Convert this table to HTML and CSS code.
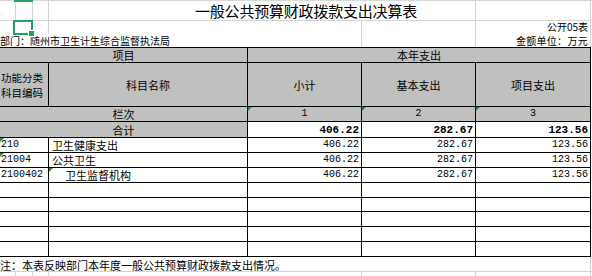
FILE: index.html
```html
<!DOCTYPE html>
<html lang="zh-CN">
<head>
<meta charset="utf-8">
<title>一般公共预算财政拨款支出决算表</title>
<link rel="stylesheet" href="styles.css">
</head>
<body>
<div class="sheet">
  <div class="row-title"><span class="title">一般公共预算财政拨款支出决算表</span></div>
  <div class="row-code"><span>公开05表</span></div>
  <div class="row-dept">
    <span class="dept">部门：随州市卫生计生综合监督执法局</span>
    <span class="unit">金额单位：万元</span>
  </div>

  <table class="grid">
    <colgroup>
      <col class="c1"><col class="c2"><col class="c3"><col class="c4"><col class="c5">
    </colgroup>
    <tr class="h15 head">
      <td colspan="2">项目</td>
      <td colspan="3">本年支出</td>
    </tr>
    <tr class="h44 head">
      <td class="code-head">功能分类<br>科目编码</td>
      <td>科目名称</td>
      <td>小计</td>
      <td>基本支出</td>
      <td>项目支出</td>
    </tr>
    <tr class="h15 head">
      <td colspan="2">栏次</td>
      <td class="mono mark">1</td>
      <td class="mono mark">2</td>
      <td class="mono mark">3</td>
    </tr>
    <tr class="h16">
      <td colspan="2" class="gray center">合计</td>
      <td class="num bold">406.22</td>
      <td class="num bold">282.67</td>
      <td class="num bold">123.56</td>
    </tr>
    <tr class="h15">
      <td class="code mark">210</td>
      <td class="name">卫生健康支出</td>
      <td class="num">406.22</td>
      <td class="num">282.67</td>
      <td class="num">123.56</td>
    </tr>
    <tr class="h15">
      <td class="code mark">21004</td>
      <td class="name">公共卫生</td>
      <td class="num">406.22</td>
      <td class="num">282.67</td>
      <td class="num">123.56</td>
    </tr>
    <tr class="h15">
      <td class="code">2100402</td>
      <td class="name indent mark">卫生监督机构</td>
      <td class="num">406.22</td>
      <td class="num">282.67</td>
      <td class="num">123.56</td>
    </tr>
    <tr class="h15"><td></td><td></td><td></td><td></td><td></td></tr>
    <tr class="h14"><td></td><td></td><td></td><td></td><td></td></tr>
    <tr class="h15"><td></td><td></td><td></td><td></td><td></td></tr>
    <tr class="h15"><td></td><td></td><td></td><td></td><td></td></tr>
    <tr class="h15"><td></td><td></td><td></td><td></td><td></td></tr>
  </table>

  <div class="row-note">注：本表反映部门本年度一般公共预算财政拨款支出情况。</div>
  <div class="row-tail"></div>

  <div class="sel-top"></div>
  <div class="sel-box"><span class="handle"></span></div>
</div>
</body>
</html>
```

FILE: styles.css
```css
html, body {
  margin: 0;
  padding: 0;
  background: #ffffff;
}

body {
  font-family: "Noto Sans CJK SC", "Noto Sans", sans-serif;
  font-size: 11px;
  color: #000000;
  width: 592px;
  height: 276px;
  overflow: hidden;
}

.sheet {
  position: relative;
  width: 592px;
  height: 276px;
}

/* --- top rows with light spreadsheet gridlines --- */
.row-title {
  height: 21px;
  box-sizing: border-box;
  border-top: 1px solid #d8d8d8;
  border-bottom: 1px solid #d4d4d4;
  padding-left: 195px;
  background-image:
    linear-gradient(#d4d4d4, #d4d4d4),
    linear-gradient(#d4d4d4, #d4d4d4),
    linear-gradient(#d4d4d4, #d4d4d4),
    linear-gradient(#d4d4d4, #d4d4d4),
    linear-gradient(#d4d4d4, #d4d4d4);
  background-size: 1px 100%;
  background-repeat: no-repeat;
  background-position: 15px 0, 32px 0, 48px 0, 475px 0, 590px 0;
}

.title {
  display: block;
  font-size: 15px;
  line-height: 19px;
  letter-spacing: -0.2px;
}

.row-code {
  height: 13px;
  display: flex;
  justify-content: flex-end;
  align-items: flex-start;
  padding-right: 4px;
  font-size: 10px;
  line-height: 11px;
  background-image:
    linear-gradient(#d4d4d4, #d4d4d4),
    linear-gradient(#d4d4d4, #d4d4d4),
    linear-gradient(#d4d4d4, #d4d4d4),
    linear-gradient(#d4d4d4, #d4d4d4),
    linear-gradient(#d4d4d4, #d4d4d4),
    linear-gradient(#d4d4d4, #d4d4d4);
  background-size: 1px 100%;
  background-repeat: no-repeat;
  background-position: 15px 0, 32px 0, 48px 0, 361px 0, 475px 0, 590px 0;
}

.row-dept {
  height: 13px;
  display: flex;
  justify-content: space-between;
  align-items: flex-end;
  padding-right: 4px;
  line-height: 12px;
  background-image:
    linear-gradient(#d4d4d4, #d4d4d4),
    linear-gradient(#d4d4d4, #d4d4d4),
    linear-gradient(#d4d4d4, #d4d4d4);
  background-size: 1px 100%;
  background-repeat: no-repeat;
  background-position: 361px 0, 475px 0, 590px 0;
}

.dept {
  font-size: 10px;
  background: #ffffff;
  padding-right: 2px;
}

.unit {
  font-size: 10px;
  letter-spacing: 0.3px;
}

/* --- main table --- */
.grid {
  border-collapse: collapse;
  table-layout: fixed;
  width: 591px;
  margin-left: -1px;
}

.c1 { width: 49px; }
.c2 { width: 199px; }
.c3 { width: 114px; }
.c4 { width: 114px; }
.c5 { width: 115px; }

.grid td {
  border: 1px solid #000000;
  padding: 0;
  line-height: 12px;
  white-space: nowrap;
  overflow: hidden;
  vertical-align: middle;
  position: relative;
}

.h15 { height: 15px; }
.h14 { height: 14px; }
.h16 { height: 16px; }
.h44 { height: 44px; }

.head td {
  background: #c0c0c0;
  text-align: center;
}

.head td.code-head {
  text-align: left;
  padding-left: 1px;
  font-size: 10.5px;
  line-height: 15px;
}

.gray { background: #c0c0c0; }
.center { text-align: center; }

.mono {
  font-family: "Liberation Mono", "DejaVu Sans Mono", monospace;
  font-size: 10px;
}

.num {
  font-family: "Liberation Mono", "DejaVu Sans Mono", monospace;
  font-size: 10px;
  text-align: right;
  padding-right: 2px !important;
}

.bold {
  font-weight: bold;
  font-size: 11px;
}

.code {
  font-family: "Liberation Mono", "DejaVu Sans Mono", monospace;
  font-size: 10px;
  padding-left: 1px !important;
}

.name { padding-left: 3px !important; }
.name.indent { padding-left: 16px !important; }

/* green error-indicator triangles */
.mark::before {
  content: "";
  position: absolute;
  left: 0;
  top: 0;
  width: 0;
  height: 0;
  border-top: 4px solid #2e8b3a;
  border-right: 4px solid transparent;
}

/* --- bottom rows --- */
.row-note {
  height: 15px;
  box-sizing: border-box;
  border-bottom: 1px solid #d4d4d4;
  line-height: 14px;
  padding-top: 1px;
  background-image: linear-gradient(#d4d4d4, #d4d4d4);
  background-size: 1px 100%;
  background-repeat: no-repeat;
  background-position: 590px 0;
}

.row-tail {
  height: 6px;
  background-image:
    linear-gradient(#d4d4d4, #d4d4d4),
    linear-gradient(#d4d4d4, #d4d4d4),
    linear-gradient(#d4d4d4, #d4d4d4),
    linear-gradient(#d4d4d4, #d4d4d4),
    linear-gradient(#d4d4d4, #d4d4d4),
    linear-gradient(#d4d4d4, #d4d4d4);
  background-size: 1px 100%;
  background-repeat: no-repeat;
  background-position: 15px 0, 32px 0, 48px 0, 361px 0, 475px 0, 590px 0;
}

/* --- selection overlays --- */
.sel-top {
  position: absolute;
  left: 14px;
  top: 0;
  width: 19px;
  height: 2px;
  background: #21a366;
}

.sel-box {
  position: absolute;
  left: 13px;
  top: 20px;
  width: 20px;
  height: 15px;
  box-sizing: border-box;
  border: 2px solid #21a366;
  background: #ffffff;
}

.handle {
  position: absolute;
  right: -4px;
  bottom: -4px;
  width: 5px;
  height: 5px;
  background: #21a366;
  border: 1px solid #ffffff;
}
```
